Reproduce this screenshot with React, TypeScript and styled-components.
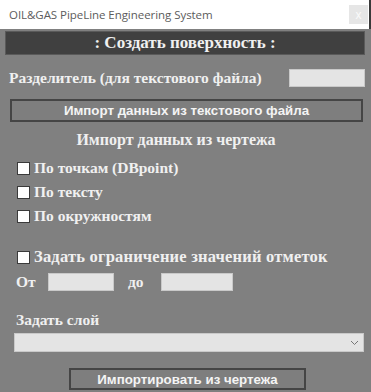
import React from "react";
import styled, { createGlobalStyle } from "styled-components";

const GlobalStyle = createGlobalStyle`
  body {
    margin: 0;
    background: #808080;
  }
`;

const serif = `"Liberation Serif", "Times New Roman", serif`;

const Window = styled.div`
  width: 371px;
  height: 392px;
  background: #808080;
  display: flex;
  flex-direction: column;
  overflow: hidden;
  font-family: ${serif};
  color: #f2f2f2;
`;

const TitleBar = styled.div`
  height: 29px;
  background: #ffffff;
  display: flex;
  align-items: center;
  justify-content: space-between;
  padding-left: 9px;
  border-right: 2px solid #3a3a3a;
  box-sizing: border-box;
`;

const TitleText = styled.span`
  font-family: "Open Sans", "Noto Sans", sans-serif;
  font-size: 11.5px;
  color: #5c5c5c;
  letter-spacing: -0.05px;
`;

const CloseButton = styled.div`
  width: 19px;
  height: 19px;
  margin-right: 1px;
  background: #e6e6e6;
  color: #fafafa;
  font-family: "Liberation Sans", Arial, sans-serif;
  font-size: 12px;
  display: flex;
  align-items: center;
  justify-content: center;
`;

const Content = styled.div`
  padding: 2px 6px 0 5px;
  display: flex;
  flex-direction: column;
`;

const Header = styled.div`
  height: 22px;
  background: #404040;
  border: 1px solid #5a5a5a;
  display: flex;
  align-items: center;
  justify-content: center;
  font-family: ${serif};
  font-weight: bold;
  font-size: 17px;
  color: #f0f0f0;
`;

const Row = styled.div<{ $top: number; $height?: number }>`
  display: flex;
  align-items: center;
  margin-top: ${p => p.$top}px;
  height: ${p => p.$height ?? 18}px;
`;

const SpacedRow = styled(Row)`
  justify-content: space-between;
`;

const Label = styled.span<{ $size?: number; $spacing?: number }>`
  font-family: ${serif};
  font-weight: bold;
  font-size: ${p => p.$size ?? 15.5}px;
  letter-spacing: ${p => p.$spacing ?? 0}px;
  white-space: nowrap;
  color: #f0f0f0;
`;

const TextField = styled.div<{ $width: number }>`
  width: ${p => p.$width}px;
  height: 18px;
  background: #e4e4e4;
  border: 1px solid #c9c9c9;
  box-sizing: border-box;
`;

const PushButton = styled.div<{ $width?: number }>`
  box-sizing: border-box;
  height: 23px;
  width: ${p => (p.$width ? `${p.$width}px` : "auto")};
  border: 2px solid #454545;
  background: #7e7e7e;
  display: flex;
  align-items: center;
  justify-content: center;
  font-family: "Liberation Sans", Arial, sans-serif;
  font-weight: bold;
  font-size: 13.3px;
  color: #f4f4f4;
`;

const SectionTitle = styled.div`
  margin-top: 9px;
  padding-right: 18px;
  text-align: center;
  font-family: ${serif};
  font-weight: bold;
  font-size: 16px;
  line-height: 18px;
  color: #f0f0f0;
`;

const CheckRow = styled.label`
  display: flex;
  align-items: center;
  height: 24px;
  padding-left: 12px;
  gap: 4px;
`;

const Box = styled.span`
  width: 13px;
  height: 13px;
  box-sizing: border-box;
  background: #ffffff;
  border: 1px solid #3a3a3a;
  flex-shrink: 0;
`;

const Select = styled.div`
  margin: 4px 1px 0 9px;
  height: 19px;
  box-sizing: border-box;
  background: #e4e4e4;
  border: 1px solid #c9c9c9;
  display: flex;
  align-items: center;
  justify-content: flex-end;
  padding-right: 4px;
`;

const Footer = styled.div`
  margin-top: 16px;
  display: flex;
  padding-left: 64px;
`;

const checks = ["По точкам (DBpoint)", "По тексту", "По окружностям"];

export default function App() {
  return (
    <>
      <GlobalStyle />
      <Window>
        <TitleBar>
          <TitleText>OIL&amp;GAS PipeLine Engineering System</TitleText>
          <CloseButton>x</CloseButton>
        </TitleBar>
        <Content>
          <Header>: Создать поверхность :</Header>
          <SpacedRow $top={14}>
            <Label style={{ marginLeft: 4 }}>Разделитель (для текстового файла)</Label>
            <TextField $width={76} />
          </SpacedRow>
          <Row $top={12} $height={23} style={{ paddingLeft: 5, paddingRight: 2 }}>
            <PushButton style={{ flex: 1 }}>Импорт данных из текстового файла</PushButton>
          </Row>
          <SectionTitle>Импорт данных из чертежа</SectionTitle>
          <div style={{ marginTop: 7 }}>
            {checks.map(c => (
              <CheckRow key={c}>
                <Box />
                <Label>{c}</Label>
              </CheckRow>
            ))}
          </div>
          <Row $top={19} $height={20} style={{ paddingLeft: 12, gap: 4 }}>
            <Box />
            <Label $size={16.5} $spacing={0.2}>Задать ограничение значений отметок</Label>
          </Row>
          <Row $top={6} style={{ paddingLeft: 11 }}>
            <Label style={{ width: 32 }}>От</Label>
            <TextField $width={66} />
            <Label style={{ marginLeft: 14, width: 33 }}>до</Label>
            <TextField $width={72} />
          </Row>
          <Row $top={20} style={{ paddingLeft: 11 }}>
            <Label>Задать слой</Label>
          </Row>
          <Select>
            <svg width="9" height="6" viewBox="0 0 9 6">
              <path d="M1 1 L4.5 4.5 L8 1" fill="none" stroke="#777" strokeWidth="1" />
            </svg>
          </Select>
          <Footer>
            <PushButton $width={237} style={{ height: 22 }}>Импортировать из чертежа</PushButton>
          </Footer>
        </Content>
      </Window>
    </>
  );
}
